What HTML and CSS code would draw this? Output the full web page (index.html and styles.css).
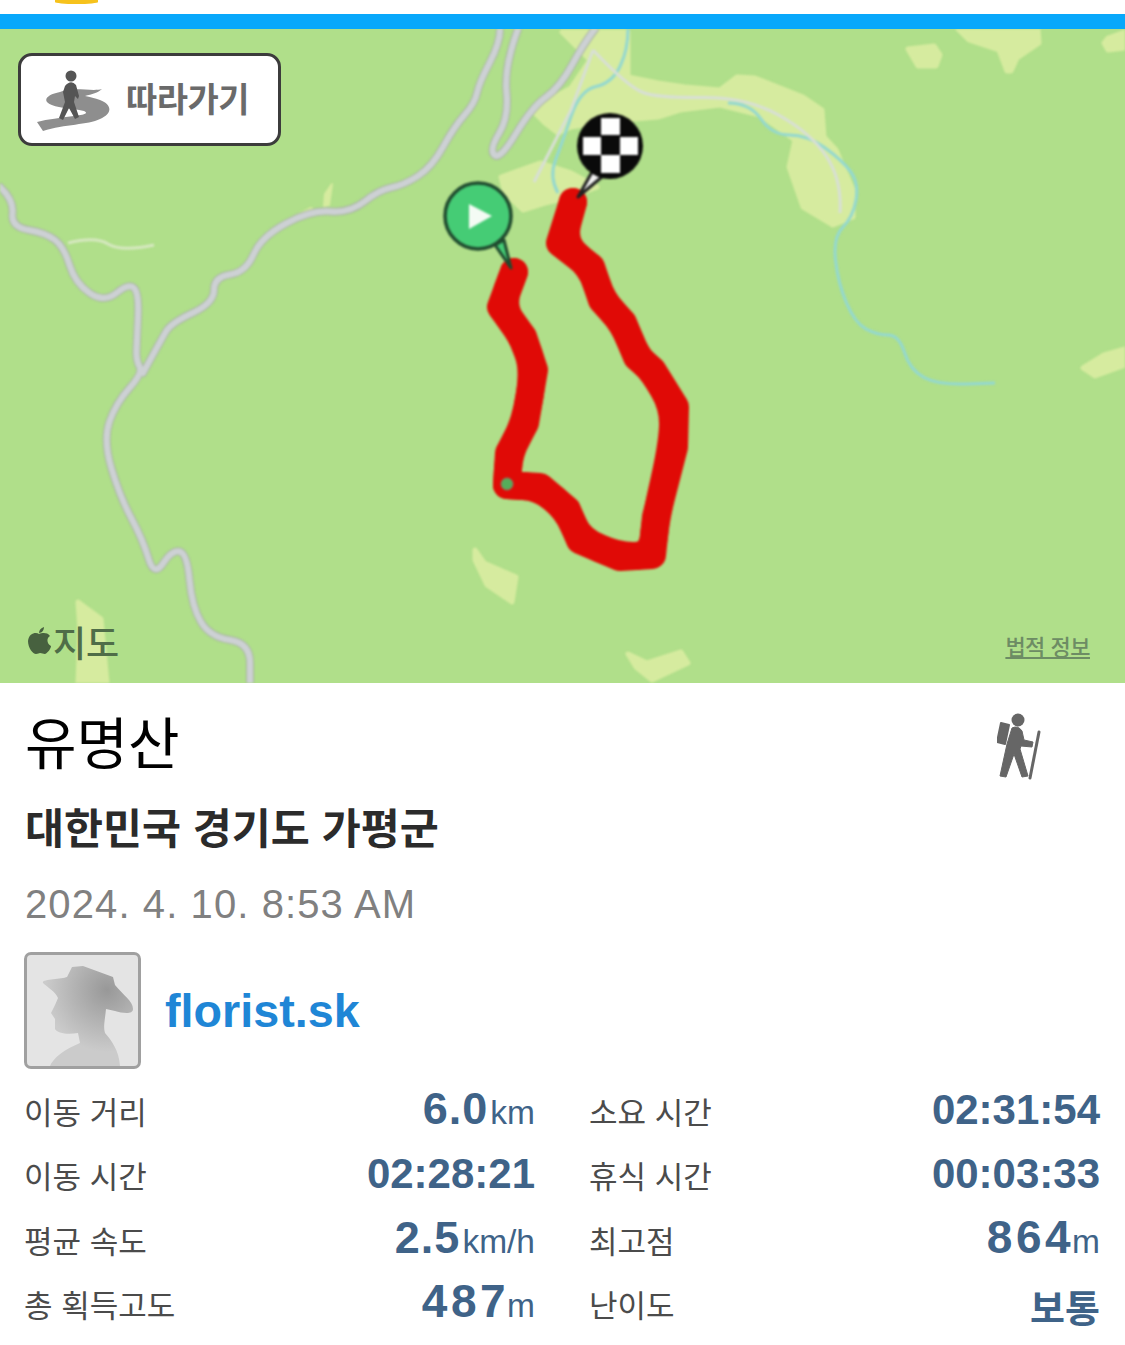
FILE: index.html
```html
<!DOCTYPE html>
<html lang="ko">
<head>
    <meta charset="utf-8">
    <title>유명산</title>
    <link rel="stylesheet" href="styles.css">
</head>
<body>
    <div class="top-strip"><span class="sun"></span></div>
    <div class="blue-bar"></div>

    <div class="map">
        <svg class="map-art" viewBox="0 29 1125 654" width="1125" height="654">
            <!-- light patches -->
            <g fill="#d6eb9f" stroke="#d6eb9f" stroke-width="5" stroke-linejoin="round">
                <path d="M562 32 L628 32 L628 77 L658 83 L685 87 L720 90 L737 77 L755 78 L803 97 L822 110 L824 137 L836 150 L853 190 L853 217 L833 225 L803 207 L789 167 L795 140 L760 115 L720 105 L680 110 L658 117 L600 122 L571 127 L558 133 L545 123 L532 110 L571 88 L590 60 Z"/>
                <path d="M501 177 L540 163 L571 173 L597 187 L571 197 L545 203 L523 210 L505 193 Z"/>
                <path d="M908 49 L934 46 L940 55 L936 66 L918 66 Z"/>
                <path d="M958 29 L1038 29 L1039 43 L1017 58 L1011 71 L1007 71 L999 50 L969 40 Z"/>
                <path d="M1125 32 L1108 38 L1104 43 L1108 50 L1125 48 Z"/>
                <path d="M1125 349 L1104 355 L1083 368 L1095 376 L1125 365 Z"/>
                <path d="M475 550 L484 563 L516 577 L512 602 L487 585 L475 560 Z"/>
                <path d="M628 654 L647 663 L681 652 L688 663 L652 680 L636 667 Z"/>
                <path d="M78 602 L101 619 L107 683 L78 683 L80 630 Z"/>
                <path d="M332 184 L329 205 L324 206 L325 194 Z" stroke-width="2"/>
                <path d="M284 222 L311 208 L318 213 L296 221 Z" stroke-width="2"/>
            </g>
            <!-- streams -->
            <g fill="none" stroke="#93d8d0" stroke-width="3" stroke-linejoin="round">
                <path d="M628 29 Q628 50 620 66.5 Q612 83 596 86.5 Q580 90 571 116.5 Q562 143 555.5 160 Q549 177 558 193"/>
                <path d="M728 103 Q750 103 761 119 Q772 135 789.5 135 Q807 135 824.5 147.5 Q842 160 850.5 171.5 Q859 183 856 200 Q853 217 843 227 Q833 237 835.5 260 Q838 283 846.5 303 Q855 323 866 329 Q877 335 888 335 Q899 335 904.5 352.5 Q910 370 924 377.5 Q938 385 966.5 384 L995 383"/>
            </g>
            <!-- roads -->
            <g fill="none" stroke="#a9b3a6" stroke-width="8" stroke-linejoin="round" stroke-linecap="round">
                <path d="M0 187 Q14 200 12.5 213.5 Q11 227 28.5 230 Q46 233 55 240 Q64 247 69.5 265 Q75 283 89.5 293 Q104 303 116.5 293 Q129 283 134 288 Q139 293 138 316.5 Q137 340 136.5 350 Q136 360 139.5 366.5 Q143 373 129.5 388 Q116 403 109.5 421.5 Q103 440 111.5 468.5 Q120 497 131.5 518.5 Q143 540 148.5 558.5 Q154 577 163 563.5 Q172 550 179.5 551.5 Q187 553 189.5 580 Q192 607 201 622 Q210 637 230 640 Q250 643 250 663 L250 683"/>
                <path d="M143 373 Q161 340 166 331.5 Q171 323 192.5 313 Q214 303 214 290 Q214 277 230 274.5 Q246 272 253.5 254.5 Q261 237 286 223.5 Q311 210 330.5 211.5 Q350 213 364.5 201.5 Q379 190 391.5 187.5 Q404 185 418 176 Q432 167 443 147 Q454 127 464.5 115 Q475 103 477 93 Q479 83 489.5 63 Q500 43 500 29"/>
                <path d="M518 29 Q504 67 506.5 92 Q509 117 499 133.5 Q489 150 494.5 155 Q500 160 516 133.5 Q532 107 546 97 Q560 87 572 65 Q584 43 595 29"/>
            </g>
            <g fill="none" stroke="#cdd1d4" stroke-width="6" stroke-linejoin="round" stroke-linecap="round">
                <path d="M0 187 Q14 200 12.5 213.5 Q11 227 28.5 230 Q46 233 55 240 Q64 247 69.5 265 Q75 283 89.5 293 Q104 303 116.5 293 Q129 283 134 288 Q139 293 138 316.5 Q137 340 136.5 350 Q136 360 139.5 366.5 Q143 373 129.5 388 Q116 403 109.5 421.5 Q103 440 111.5 468.5 Q120 497 131.5 518.5 Q143 540 148.5 558.5 Q154 577 163 563.5 Q172 550 179.5 551.5 Q187 553 189.5 580 Q192 607 201 622 Q210 637 230 640 Q250 643 250 663 L250 683"/>
                <path d="M143 373 Q161 340 166 331.5 Q171 323 192.5 313 Q214 303 214 290 Q214 277 230 274.5 Q246 272 253.5 254.5 Q261 237 286 223.5 Q311 210 330.5 211.5 Q350 213 364.5 201.5 Q379 190 391.5 187.5 Q404 185 418 176 Q432 167 443 147 Q454 127 464.5 115 Q475 103 477 93 Q479 83 489.5 63 Q500 43 500 29"/>
                <path d="M518 29 Q504 67 506.5 92 Q509 117 499 133.5 Q489 150 494.5 155 Q500 160 516 133.5 Q532 107 546 97 Q560 87 572 65 Q584 43 595 29"/>
            </g>
            <g fill="none" stroke="#d8dfd6" stroke-width="3" stroke-linejoin="round">
                <path d="M593 50 Q628 87 643 92.5 Q658 98 702 97.5 Q746 97 778.5 115 Q811 133 826.5 156.5 Q842 180 840 213"/>
                <path d="M593 50 L571 110 L534 182"/>
            </g>
            <path d="M68 243 Q96 236 108 244 Q121 252 154 245" fill="none" stroke="#d6e8c0" stroke-width="3"/>
            <!-- track: smooth line plus the raw points, which gives the lumpy edge -->
            <g fill="none" stroke="#e00a06" stroke-width="28" stroke-linejoin="round" stroke-linecap="round">
                <path d="M514 272 L507.5 289.5 Q501 307 512 322 Q523 337 528.5 353.5 Q534 370 529.5 396.5 Q525 423 517 438 Q509 453 508 469 L507 485 L523 486 Q540 487 553.5 498.5 Q567 510 573.5 525 Q580 540 600 548.5 Q620 557 636 556 Q652 555 654 536 Q656 517 664 482 Q672 447 673 427 Q674 407 663 388.5 Q652 370 644.5 363.5 Q637 357 630 340 Q623 323 612.5 311.5 Q602 300 596.5 283.5 Q591 267 576.5 255 Q562 243 567.5 222.5 L573 202"/>
                <path d="M514 272 L501 307 L523 337 L534 370 L525 423 L509 453 L507 485 L540 487 L567 510 L580 540 L620 557 L652 555 L656 517 L674 447 L675 407 L652 370 L637 357 L623 323 L602 300 L591 267 L560 243 L573 202"/>
            </g>
            <circle cx="507" cy="484" r="6" fill="#55ad5a" stroke="#8b7a62" stroke-width="1"/>
            <!-- start pin -->
            <path d="M495 245 L511 268 L504 240 Z" fill="#45cc75" stroke="#1f4a2e" stroke-width="3" stroke-linejoin="round"/>
            <circle cx="478" cy="216" r="33" fill="#45cc75" stroke="#1f4a2e" stroke-width="3.5"/>
            <path d="M469 204 L469 229 L492 216 Z" fill="#f4fbf4"/>
            <!-- finish pin -->
            <path d="M592 172 L578 197 L603 176 Z" fill="#f2f2f2" stroke="#222" stroke-width="3" stroke-linejoin="round"/>
            <circle cx="610" cy="146" r="33" fill="#0a0a0a"/>
            <g fill="#fff">
                <rect x="601" y="118" width="19" height="17"/>
                <rect x="583" y="137" width="18" height="18"/>
                <rect x="620" y="137" width="18" height="18"/>
                <rect x="601" y="155" width="19" height="18"/>
            </g>
        </svg>

        <button class="follow-btn">
            <svg class="follow-icon" viewBox="34 64 80 68" width="80" height="68">
                <path d="M102 87 C92 90 72 84 60 90 C50 92 44 96 47 100 C52 106 72 106 84 109 C90 112 82 113 74 114 C60 116 48 117 37 120 L43 129 C65 122 88 123 100 117 C112 112 113 103 100 98 C95 96 90 95 85 94 C92 92 98 91 102 87 Z" fill="#8e8e8e"/>
                <circle cx="71" cy="74" r="5.5" fill="#555"/>
                <path d="M65 84 Q71 77 76 83 L79 94 L78 97 L75 94 L74 100 L79 115 L75 117 L69 106 L63 118 L59 116 L65 100 L63 90 Z" fill="#555"/>
            </svg>
            <span class="follow-label">따라가기</span>
        </button>

        <div class="map-brand">
            <svg class="apple" viewBox="0 0 24 28" width="24" height="28">
                <path d="M12 7 C9 5 2 6 1 14 C1 21 6 27 9 27 C11 27 12 26 13 26 C15 26 16 27 18 27 C21 26 24 21 24 19 C20 17 19 11 23 9 C20 5 15 6 12 7 Z M12 6 C12 3 14 1 17 0 C17 3 15 6 12 6 Z" fill="#47613f"/>
            </svg>
            <span>지도</span>
        </div>
        <span class="legal">법적 정보</span>
    </div>

    <div class="details">
        <div class="title-row">
            <div class="title">유명산</div>
            <svg class="hiker" viewBox="0 0 48 70" width="48" height="70">
                <circle cx="21" cy="9" r="6.5" fill="#666"/>
                <path d="M4 12 L12 14 L8 33 L0 31 Z" fill="#666" stroke="#666" stroke-width="2" stroke-linejoin="round"/>
                <path d="M15 17 Q21 14 25 20 L27 29 L36 31 L35 36 L24 35 L23 38 L31 65 L25 66 L17 43 L9 66 L3 65 L10 33 Z" fill="#666" stroke="#666" stroke-width="1" stroke-linejoin="round"/>
                <path d="M42 21 L33 67" stroke="#666" stroke-width="3" stroke-linecap="round"/>
            </svg>
        </div>
        <div class="region">대한민국 경기도 가평군</div>
        <div class="date">2024. 4. 10. 8:53 AM</div>

        <div class="user">
            <div class="avatar">
                <svg viewBox="0 0 111 111" width="111" height="111">
                    <defs>
                        <radialGradient id="figure" gradientUnits="userSpaceOnUse" cx="80" cy="35" r="62">
                            <stop offset="0" stop-color="#989898"/>
                            <stop offset="1" stop-color="#cbcbcb"/>
                        </radialGradient>
                    </defs>
                    <path d="M16 28 C14 24 35 24 40 22 L45 12 L56 11 L86 22 L88 30 C96 40 106 46 106 54 C106 60 95 58 88 56 L79 54 C78 65 76 72 78 78 C84 85 92 95 93 111 L23 111 C26 103 38 94 53 88 L51 78 C40 80 30 78 28 74 L28 64 L24 58 L28 50 L31 43 C28 36 20 32 16 28 Z" fill="url(#figure)"/>
                </svg>
            </div>
            <a class="username">florist.sk</a>
        </div>

        <div class="stats">
            <div class="stat"><span class="label">이동 거리</span><span class="value decimal">6.0<small>km</small></span></div>
            <div class="stat"><span class="label">소요 시간</span><span class="value">02:31:54</span></div>
            <div class="stat"><span class="label">이동 시간</span><span class="value">02:28:21</span></div>
            <div class="stat"><span class="label">휴식 시간</span><span class="value">00:03:33</span></div>
            <div class="stat"><span class="label">평균 속도</span><span class="value decimal">2.5<small>km/h</small></span></div>
            <div class="stat"><span class="label">최고점</span><span class="value whole">864<small>m</small></span></div>
            <div class="stat"><span class="label">총 획득고도</span><span class="value whole">487<small>m</small></span></div>
            <div class="stat"><span class="label">난이도</span><span class="value level">보통</span></div>
        </div>
    </div>
</body>
</html>
```

FILE: styles.css
```css
* {
    box-sizing: border-box;
}
body {
    margin: 0;
    background-color: white;
    font-family: "Liberation Sans", "Noto Sans CJK KR", sans-serif;
    overflow: hidden;
}
.top-strip {
    height: 14px;
    padding-left: 55px;
}
.sun {
    display: block;
    width: 43px;
    height: 4px;
    background-color: #f6c21c;
    border-radius: 0 0 50% 50%;
}
.blue-bar {
    height: 15px;
    background-color: #08a8fb;
}
.map {
    position: relative;
    height: 654px;
    background-color: #b0df8a;
    overflow: hidden;
}
.map-art {
    display: block;
    filter: blur(1.1px);
}
.follow-btn {
    position: absolute;
    top: 24px;
    left: 18px;
    width: 263px;
    height: 93px;
    display: flex;
    align-items: center;
    gap: 12px;
    padding: 0 0 4px 13px;
    background-color: white;
    border: 3px solid #3c3c3c;
    border-radius: 14px;
}
.follow-icon {
    flex: none;
    margin-top: 4px;
    filter: blur(0.5px);
}
.follow-label {
    font-family: "Noto Sans CJK KR", sans-serif;
    font-size: 34px;
    font-weight: 700;
    color: #6a6a6a;
    letter-spacing: -0.5px;
}
.map-brand {
    position: absolute;
    left: 27px;
    bottom: 23px;
    display: flex;
    align-items: center;
    gap: 2px;
    font-family: "Noto Sans CJK KR", sans-serif;
    font-size: 36px;
    font-weight: 500;
    line-height: 38px;
    color: #4f6d48;
}
.apple {
    flex: none;
}
.legal {
    position: absolute;
    right: 35px;
    bottom: 24px;
    font-family: "Noto Sans CJK KR", sans-serif;
    font-size: 22px;
    font-weight: 500;
    line-height: 28px;
    color: #6d8c64;
    text-decoration: underline;
    letter-spacing: -0.5px;
}
.details {
    padding: 21px 25px 0;
}
.title-row {
    display: flex;
    justify-content: space-between;
    padding-right: 55px;
}
.title {
    font-family: "Noto Sans CJK KR", sans-serif;
    font-size: 56px;
    line-height: 72px;
    color: black;
}
.hiker {
    margin-top: 7px;
}
.region {
    margin-top: 15px;
    font-family: "Noto Sans CJK KR", sans-serif;
    font-size: 42.4px;
    font-weight: 700;
    line-height: 60px;
    color: #2b2b2b;
}
.date {
    margin-top: 25px;
    font-size: 40px;
    line-height: 46px;
    color: #808080;
    letter-spacing: 1.1px;
}
.user {
    display: flex;
    align-items: center;
    gap: 24px;
    margin-top: 25px;
    margin-left: -1px;
}
.avatar {
    width: 117px;
    height: 117px;
    background-color: #e4e4e4;
    border: 3px solid #a0a0a0;
    border-radius: 7px;
    overflow: hidden;
}
.avatar svg {
    display: block;
}
.username {
    font-size: 46.7px;
    font-weight: 700;
    color: #1f86d6;
}
.stats {
    display: grid;
    grid-template-columns: 510px 510px;
    column-gap: 55px;
    grid-auto-rows: 64.3px;
    margin-top: 20px;
}
.stat {
    display: flex;
    justify-content: space-between;
    align-items: baseline;
    line-height: 44px;
}
.label {
    margin-left: -1px;
    font-family: "Noto Sans CJK KR", sans-serif;
    font-size: 31px;
    color: #4b4b4b;
}
.value {
    font-size: 42px;
    font-weight: 700;
    line-height: 36px;
    color: #3f6388;
}
.decimal {
    font-size: 45px;
    letter-spacing: 1px;
}
.whole {
    font-size: 46px;
    letter-spacing: 3.5px;
}
.value small {
    margin-left: 2px;
    font-size: 33.5px;
    font-weight: 400;
    letter-spacing: 0;
}
.whole small {
    margin-left: -2px;
}
.level {
    align-self: flex-start;
    margin-top: 6px;
    font-family: "Noto Sans CJK KR", sans-serif;
    font-size: 38px;
}
```
